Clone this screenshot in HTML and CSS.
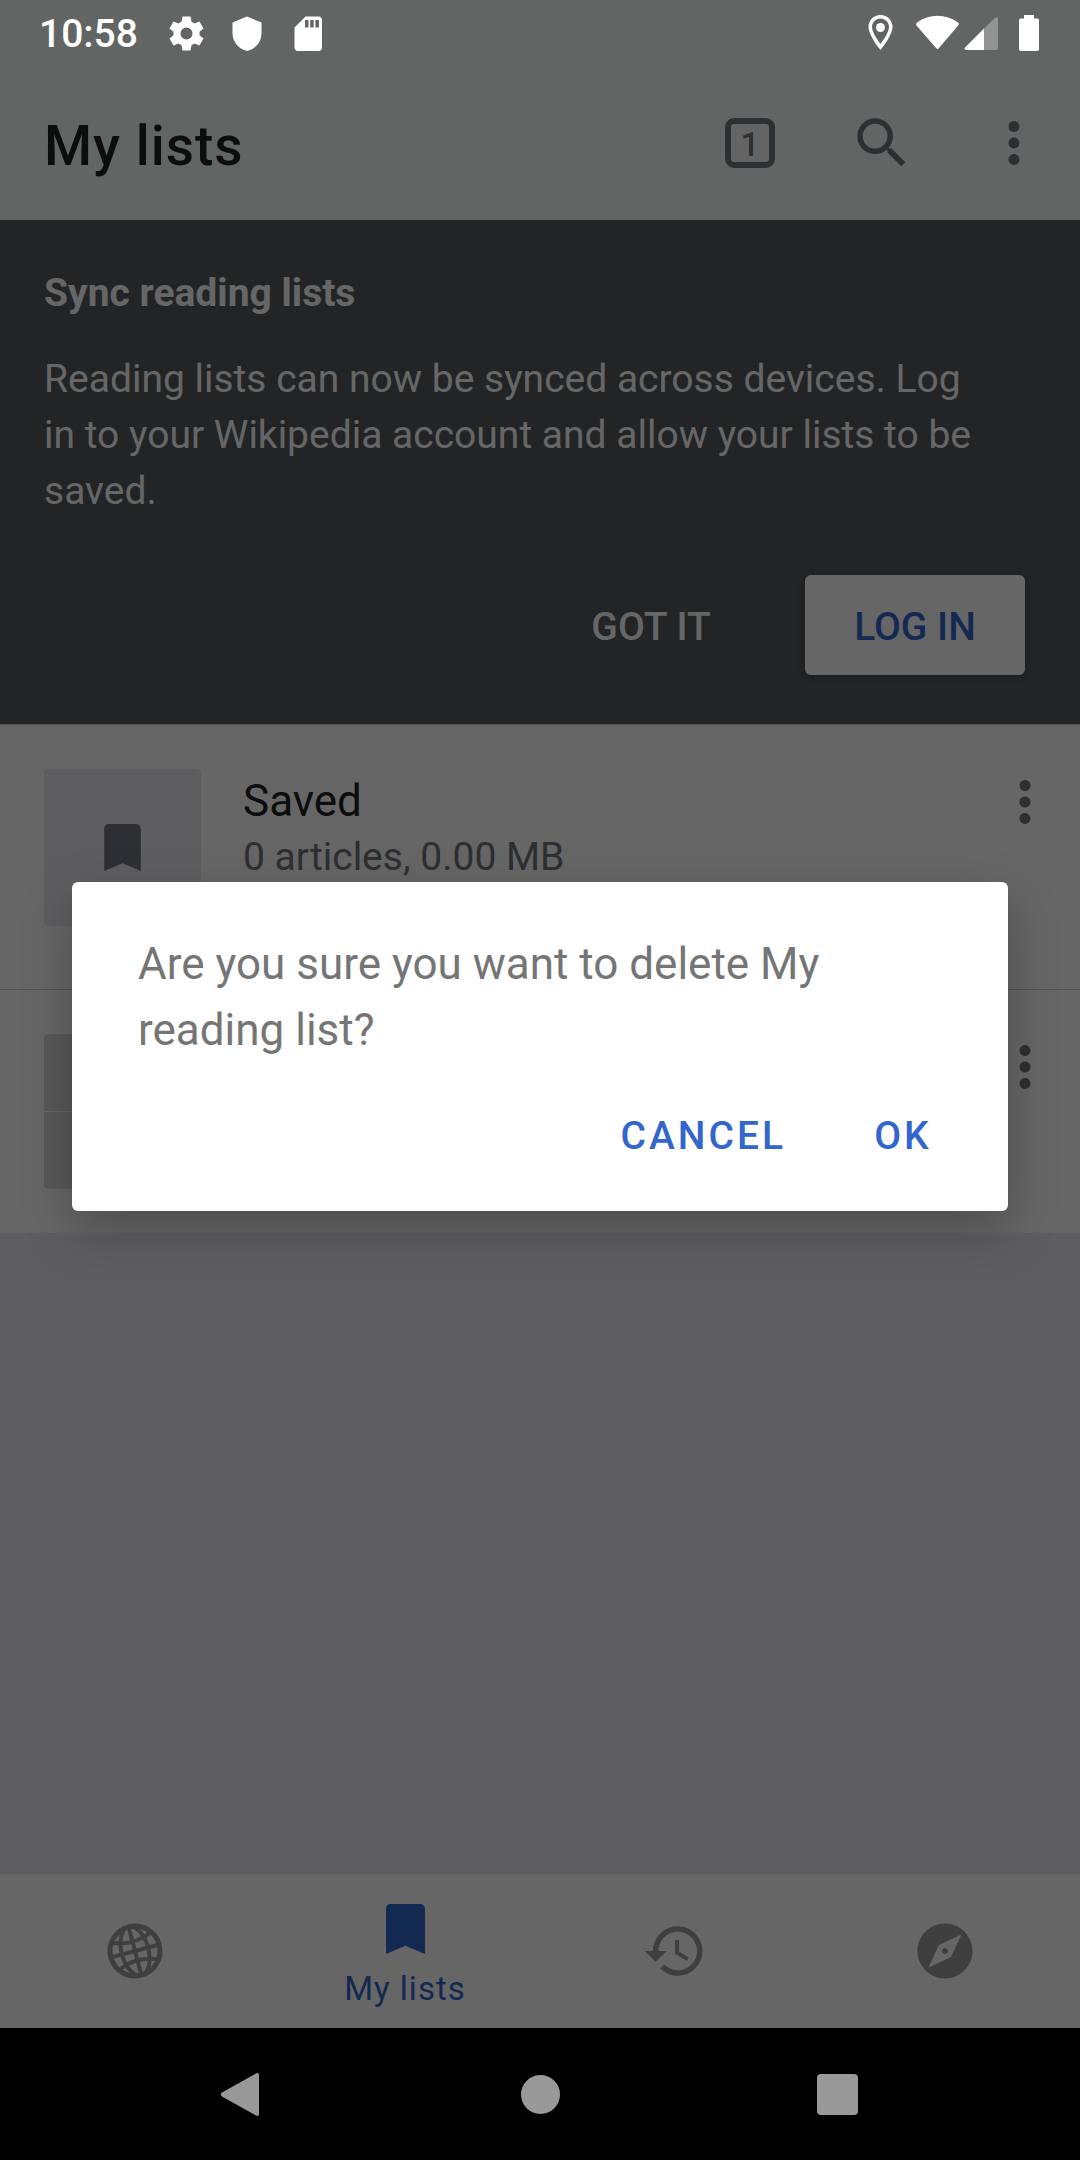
FILE: index.html
```html
<!DOCTYPE html>
<html lang="en">
<head>
<meta charset="utf-8">
<meta name="viewport" content="width=device-width, initial-scale=1">
<title>My lists</title>
<link rel="stylesheet" href="styles.css">
</head>
<body>
<svg class="sprite" aria-hidden="true">
  <symbol id="more" viewBox="0 0 24 24"><path d="M12 8c1.100 0 2-.9 2-2s-.9-2-2-2-2 .9-2 2 .9 2 2 2zm0 2c-1.100 0-2 .9-2 2s.9 2 2 2 2-.9 2-2-.9-2-2-2zm0 6c-1.100 0-2 .9-2 2s.9 2 2 2 2-.9 2-2-.9-2-2-2z"/></symbol>
  <symbol id="bookmark" viewBox="0 0 14 18"><path d="M12.300 0H1.700C.75 0 0 .75 0 1.700V18l7-3 7 3V1.700C14 .75 13.250 0 12.300 0z"/></symbol>
</svg>
<div class="screen">
  <header class="status">
    <time class="clock">10:58</time>
    <svg class="status-icon" viewBox="0 0 44 44"><path fill-rule="evenodd" d="M18.500 5.500h8l1 5.300 3 1.700 5-2 4 7-4 3.300v3.400l4 3.300-4 7-5-2-3 1.700-1 5.300h-8l-1-5.300-3-1.700-5 2-4-7 4-3.300v-3.400l-4-3.300 4-7 5 2 3-1.700zM22.500 16.500a6 6 0 1 0 0 12 6 6 0 1 0 0-12z"/></svg>
    <svg class="status-icon" viewBox="0 0 44 44"><path d="M22 5.500l14.500 6v10.500C36.500 31.500 30 38 22 40 14 38 7.500 31.500 7.500 22V11.500z"/></svg>
    <svg class="status-icon" viewBox="0 0 44 44"><path fill-rule="evenodd" d="M19.500 5.500H33c1.500 0 3 1.500 3 3V37c0 1.500-1.500 3-3 3H11.500c-1.500 0-3-1.500-3-3V16.500zM19 9v7.500h3.500V9zm5.200 0v7.500h3.500V9zm5.200 0v7.500h3.500V9z"/></svg>
    <svg class="signals" viewBox="0 0 180 44" aria-label="Location, Wi-Fi, signal, battery">
      <path fill-rule="evenodd" d="M20.500 4C13.500 4 8.500 9.500 8.500 16c0 8.500 12 23 12 23s12-14.500 12-23c0-6.500-5-12-12-12zm0 3.500c4.700 0 8.500 3.700 8.500 8.500 0 5-5.500 13-8.500 17-3-4-8.500-12-8.500-17 0-4.800 3.800-8.500 8.500-8.500z"/><circle cx="20.500" cy="16.500" r="4.500"/>
      <path d="M57 11.500C69 2.500 86 2.500 98 11.500c1 1 1 2 .2 3L79 37c-1 1.300-2 1.300-3 0L56.500 14.500c-.7-1-.5-2.200.5-3z"/>
      <path d="M124 17.500V39h-17.500c-2 0-2.500-1.500-1.500-2.500z"/><path opacity=".3" d="M124 17.500L135 6.800c1.300-1 3-.5 3 1.200v29c0 1.300-.7 2-2 2h-12z"/>
      <path d="M164 4h10v3.500h3c1.300 0 2 .7 2 2V38c0 1.300-.7 2-2 2h-16c-1.300 0-2-.7-2-2V9.500c0-1.300.7-2 2-2h3z"/>
    </svg>
  </header>
  <div class="toolbar">
    <h1 class="title">My lists</h1>
    <button class="tool" aria-label="Tabs"><span class="tabs">1</span></button>
    <button class="tool" aria-label="Search"><svg class="icon" viewBox="0 0 24 24"><path d="M15.500 14h-.79l-.28-.27C15.410 12.590 16 11.110 16 9.500 16 5.910 13.090 3 9.500 3S3 5.910 3 9.500 5.910 16 9.500 16c1.610 0 3.090-.59 4.230-1.570l.27.28v.79l5 4.990L20.490 19l-4.990-5zm-6 0C7.010 14 5 11.990 5 9.500S7.010 5 9.500 5 14 7.010 14 9.500 11.990 14 9.500 14z"/></svg></button>
    <button class="tool" aria-label="More options"><svg class="icon"><use href="#more"/></svg></button>
  </div>
  <section class="sync">
    <h2 class="sync-title">Sync reading lists</h2>
    <p class="sync-text">Reading lists can now be synced across devices. Log in to your Wikipedia account and allow your lists to be saved.</p>
    <div class="sync-actions">
      <button class="button">GOT IT</button>
      <button class="button button-filled">LOG IN</button>
    </div>
  </section>
  <main class="lists">
    <article class="row row-first">
      <div class="cover"><svg class="cover-icon"><use href="#bookmark"/></svg></div>
      <div class="info"><h3 class="name">Saved</h3><p class="meta">0 articles, 0.00 MB</p></div>
      <button class="row-menu" aria-label="List options"><svg class="icon"><use href="#more"/></svg></button>
    </article>
    <article class="row">
      <div class="thumbs"><span></span><span></span><span></span><span></span></div>
      <div class="info"></div>
      <button class="row-menu" aria-label="List options"><svg class="icon"><use href="#more"/></svg></button>
    </article>
  </main>
  <nav class="tabbar">
    <a class="tab" href="#explore" aria-label="Explore"><svg class="icon" viewBox="0 0 66 66"><g class="globe" transform="rotate(-15 33 33)"><circle cx="33" cy="33" r="25"/><ellipse cx="33" cy="33" rx="13.500" ry="25"/><path d="M33 8v50M8 33h50M13 19q20 9 40 0M13 47q20-9 40 0"/></g></svg></a>
    <a class="tab tab-active" href="#lists" aria-current="page"><svg class="tab-bookmark"><use href="#bookmark"/></svg><span>My lists</span></a>
    <a class="tab" href="#history" aria-label="History"><svg class="icon" viewBox="0 0 24 24"><path d="M13 3c-4.970 0-9 4.030-9 9H1l3.890 3.890.07.14L9 12H6c0-3.870 3.130-7 7-7s7 3.130 7 7-3.130 7-7 7c-1.930 0-3.680-.79-4.940-2.060l-1.420 1.420C8.270 19.990 10.510 21 13 21c4.970 0 9-4.030 9-9s-4.030-9-9-9zm-1 5v5l4.280 2.540.72-1.210-3.500-2.080V8H12z"/></svg></a>
    <a class="tab" href="#nearby" aria-label="Nearby"><svg class="icon" viewBox="0 0 24 24"><path d="M12 10.900c-.61 0-1.100.49-1.100 1.100s.49 1.100 1.100 1.100c.61 0 1.100-.49 1.100-1.100s-.49-1.100-1.100-1.100zM12 2C6.480 2 2 6.480 2 12s4.480 10 10 10 10-4.480 10-10S17.520 2 12 2zm2.190 12.190L6 18l3.810-8.190L18 6l-3.810 8.190z"/></svg></a>
  </nav>
  <footer class="system">
    <button class="key" aria-label="Back"><svg class="icon" viewBox="0 0 66 66"><path d="M49 12.500c1.700-1 3-.3 3 1.500v39c0 1.800-1.300 2.500-3 1.500L15 35.500c-1.700-1-1.700-3 0-4z"/></svg></button>
    <button class="key" aria-label="Home"><svg class="icon" viewBox="0 0 66 66"><circle cx="33.500" cy="33.500" r="19.500"/></svg></button>
    <button class="key" aria-label="Recent apps"><svg class="icon" viewBox="0 0 66 66"><rect x="10" y="13" width="41" height="41" rx="4"/></svg></button>
  </footer>
  <div class="scrim">
    <div class="dialog" role="alertdialog" aria-modal="true" aria-labelledby="question">
      <p class="question" id="question">Are you sure you want to delete My reading list?</p>
      <div class="dialog-actions">
        <button class="choice">CANCEL</button>
        <button class="choice">OK</button>
      </div>
    </div>
  </div>
</div>
</body>
</html>
```
FILE: styles.css
```css
* { box-sizing: border-box; }
body, h1, h2, h3, p { margin: 0; }
body { font-family: Roboto, "Liberation Sans", sans-serif; color: #202122; background: #eaecf0; }
button { padding: 0; border: 0; background: none; font: inherit; color: inherit; }
svg { display: block; fill: currentColor; flex: none; }
.sprite { position: absolute; width: 0; height: 0; }
.icon { width: 66px; height: 66px; }

.screen { position: relative; min-height: 100vh; display: flex; flex-direction: column; }

/* Status bar: its glyphs stay bright above the scrim */
.status { display: flex; align-items: center; height: 66px; padding: 0 40px 0 39px; color: #fff; position: relative; z-index: 2; }
.clock { font-size: 39px; line-height: 66px; font-weight: 500; margin-right: 26px; padding-top: 2px; }
.status-icon { width: 44px; height: 44px; margin-right: 17px; }
.signals { width: 180px; height: 44px; margin-left: auto; }
.screen::before { content: ""; position: absolute; inset: 0 0 auto; height: 220px; background: #f8fcfa; }

.toolbar { position: relative; display: flex; align-items: center; height: 154px; padding-left: 44px; color: #72777d; }
.title { flex: 1; padding-top: 6px; font-size: 55px; line-height: 66px; font-weight: 500; color: #202122; letter-spacing: 1px; }
.tool { width: 132px; height: 132px; display: flex; align-items: center; justify-content: center; }
.tabs { width: 50px; height: 50px; border: 6px solid; border-radius: 9px; font-size: 33px; line-height: 42px; font-weight: 500; text-align: center; }

.sync { background: #565a5e; color: #fff; padding: 45px 55px 49px 44px; border-bottom: 1px solid #c8ccd1; }
.sync-title { font-size: 39px; line-height: 56px; font-weight: 700; }
.sync-text { font-size: 39px; line-height: 56px; margin-top: 30px; padding-right: 44px; }
.sync-actions { display: flex; justify-content: flex-end; gap: 44px; margin-top: 56px; }
.button { min-width: 220px; height: 100px; padding-top: 3px; border-radius: 6px; font-size: 39px; font-weight: 500; }
.button-filled { background: #fff; color: #36c; box-shadow: 0 2px 8px rgba(0, 0, 0, .2); }

.lists { flex: 1; }
.row { display: flex; align-items: flex-start; padding: 44px 22px 44px 44px; background: #fff; }
.row-first { padding-bottom: 63px; border-bottom: 1px solid #c8ccd1; }
.cover { width: 157px; height: 157px; border-radius: 5px; background: #eaecf0; color: #72777d; display: flex; align-items: center; justify-content: center; }
.cover-icon { width: 37px; height: 47px; }
.thumbs { width: 155px; height: 155px; display: grid; grid-template-columns: 1fr 1fr; gap: 1px; border-radius: 5px; overflow: hidden; }
.thumbs span { background: #dcdcdc; }
.info { flex: 1; padding-left: 42px; }
.name { font-size: 44px; line-height: 64px; font-weight: 400; }
.meta { font-size: 39px; line-height: 48px; color: #72777d; }
.row-menu { width: 66px; height: 66px; color: #72777d; }

.tabbar { display: flex; height: 154px; background: #fff; color: #9e9e9e; box-shadow: 0 -1px 4px rgba(0, 0, 0, .05); }
.tab { flex: 1; display: flex; flex-direction: column; align-items: center; justify-content: center; color: inherit; text-decoration: none; font-size: 33px; line-height: 40px; letter-spacing: 1px; }
.tab-active { color: #36c; gap: 15px; padding-top: 11px; }
.tab-bookmark { width: 39px; height: 50px; }
.globe { fill: none; stroke: currentColor; stroke-width: 4; }
.globe circle { stroke-width: 5; }

.system { display: flex; height: 132px; padding: 0 90px; background: #000; color: #999; position: relative; z-index: 2; }
.key { flex: 1; display: flex; align-items: center; justify-content: center; }

.scrim { position: absolute; inset: 0; z-index: 1; padding: 0 72px 67px; display: flex; align-items: center; background: rgba(0, 0, 0, .6); }
.dialog { flex: 1; padding: 49px 17px 9px 16px; border-radius: 6px; background: #fff; box-shadow: 0 18px 50px rgba(0, 0, 0, .25); }
.question { padding: 0 50px; font-size: 44px; line-height: 66px; color: #757575; }
.dialog-actions { display: flex; justify-content: flex-end; gap: 7px; margin-top: 7px; }
.choice { min-width: 176px; height: 132px; padding: 0 22px; font-size: 39px; font-weight: 500; letter-spacing: 3px; color: #36c; }
```
